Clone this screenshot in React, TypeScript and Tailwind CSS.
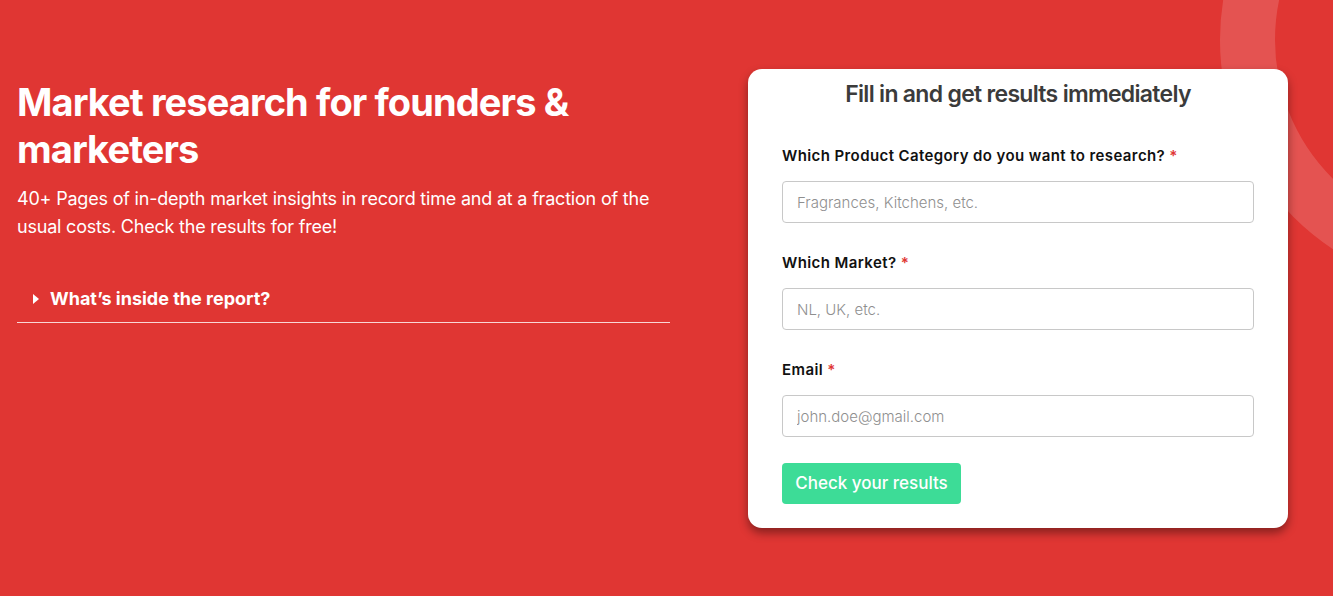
import React from "react";

function Field({ label, placeholder, type = "text" }: { label: string; placeholder: string; type?: string }) {
  return (
    <div className="flex flex-col">
      <label className="text-[15px] font-semibold leading-[20px] tracking-[0.4px] text-[#111111]">
        {label} <span className="text-[#e03633]">*</span>
      </label>
      <input
        type={type}
        placeholder={placeholder}
        className="mt-[15px] h-[42px] w-full rounded-[4px] border border-[#c8c8c8] bg-white px-[14px] text-[15px] font-light text-[#333] placeholder:text-[#8f8f8f] outline-none"
      />
    </div>
  );
}

export default function App() {
  return (
    <div className="relative h-[596px] w-full overflow-hidden bg-[#e03633] font-['Inter','Liberation_Sans',sans-serif]">
      <div className="pointer-events-none absolute right-[-387px] top-[-210px] h-[500px] w-[500px] rounded-full border-[55px] border-white/15" />
      <div className="relative flex px-[17px] pt-[69px]">
        <div className="w-[653px] pt-[10px] text-white">
          <h1 className="text-[38px] font-bold leading-[47px] tracking-[-0.9px]">
            Market research for founders &amp; marketers
          </h1>
          <p className="mt-[12px] text-[18px] leading-[28px] tracking-[-0.2px]">
            40+ Pages of in-depth market insights in record time and at a fraction of the usual costs. Check the results for free!
          </p>
          <div className="mt-[46px] border-b border-white/80 pb-[11px]">
            <div className="flex items-center pl-[15px]">
              <svg width="8" height="10" viewBox="0 0 8 10" className="mr-[10px]">
                <path d="M1 0 L7 5 L1 10 Z" fill="white" />
              </svg>
              <span className="text-[18px] font-bold leading-[24px]">What’s inside the report?</span>
            </div>
          </div>
        </div>
        <div className="ml-[78px] w-[540px] rounded-[14px] bg-white px-[34px] pb-[24px] pt-[10px] shadow-[0_5px_10px_rgba(0,0,0,0.4)]">
          <h2 className="text-center text-[23px] font-semibold leading-[30px] tracking-[-0.7px] text-[#3b3b3b]">
            Fill in and get results immediately
          </h2>
          <div className="mt-[37px] flex flex-col gap-[30px]">
            <Field label="Which Product Category do you want to research?" placeholder="Fragrances, Kitchens, etc." />
            <Field label="Which Market?" placeholder="NL, UK, etc." />
            <Field label="Email" placeholder="john.doe@gmail.com" type="email" />
          </div>
          <button className="mt-[26px] h-[41px] w-[179px] rounded-[4px] bg-[#3ddc97] text-[17px] font-medium text-white">
            Check your results
          </button>
        </div>
      </div>
    </div>
  );
}
